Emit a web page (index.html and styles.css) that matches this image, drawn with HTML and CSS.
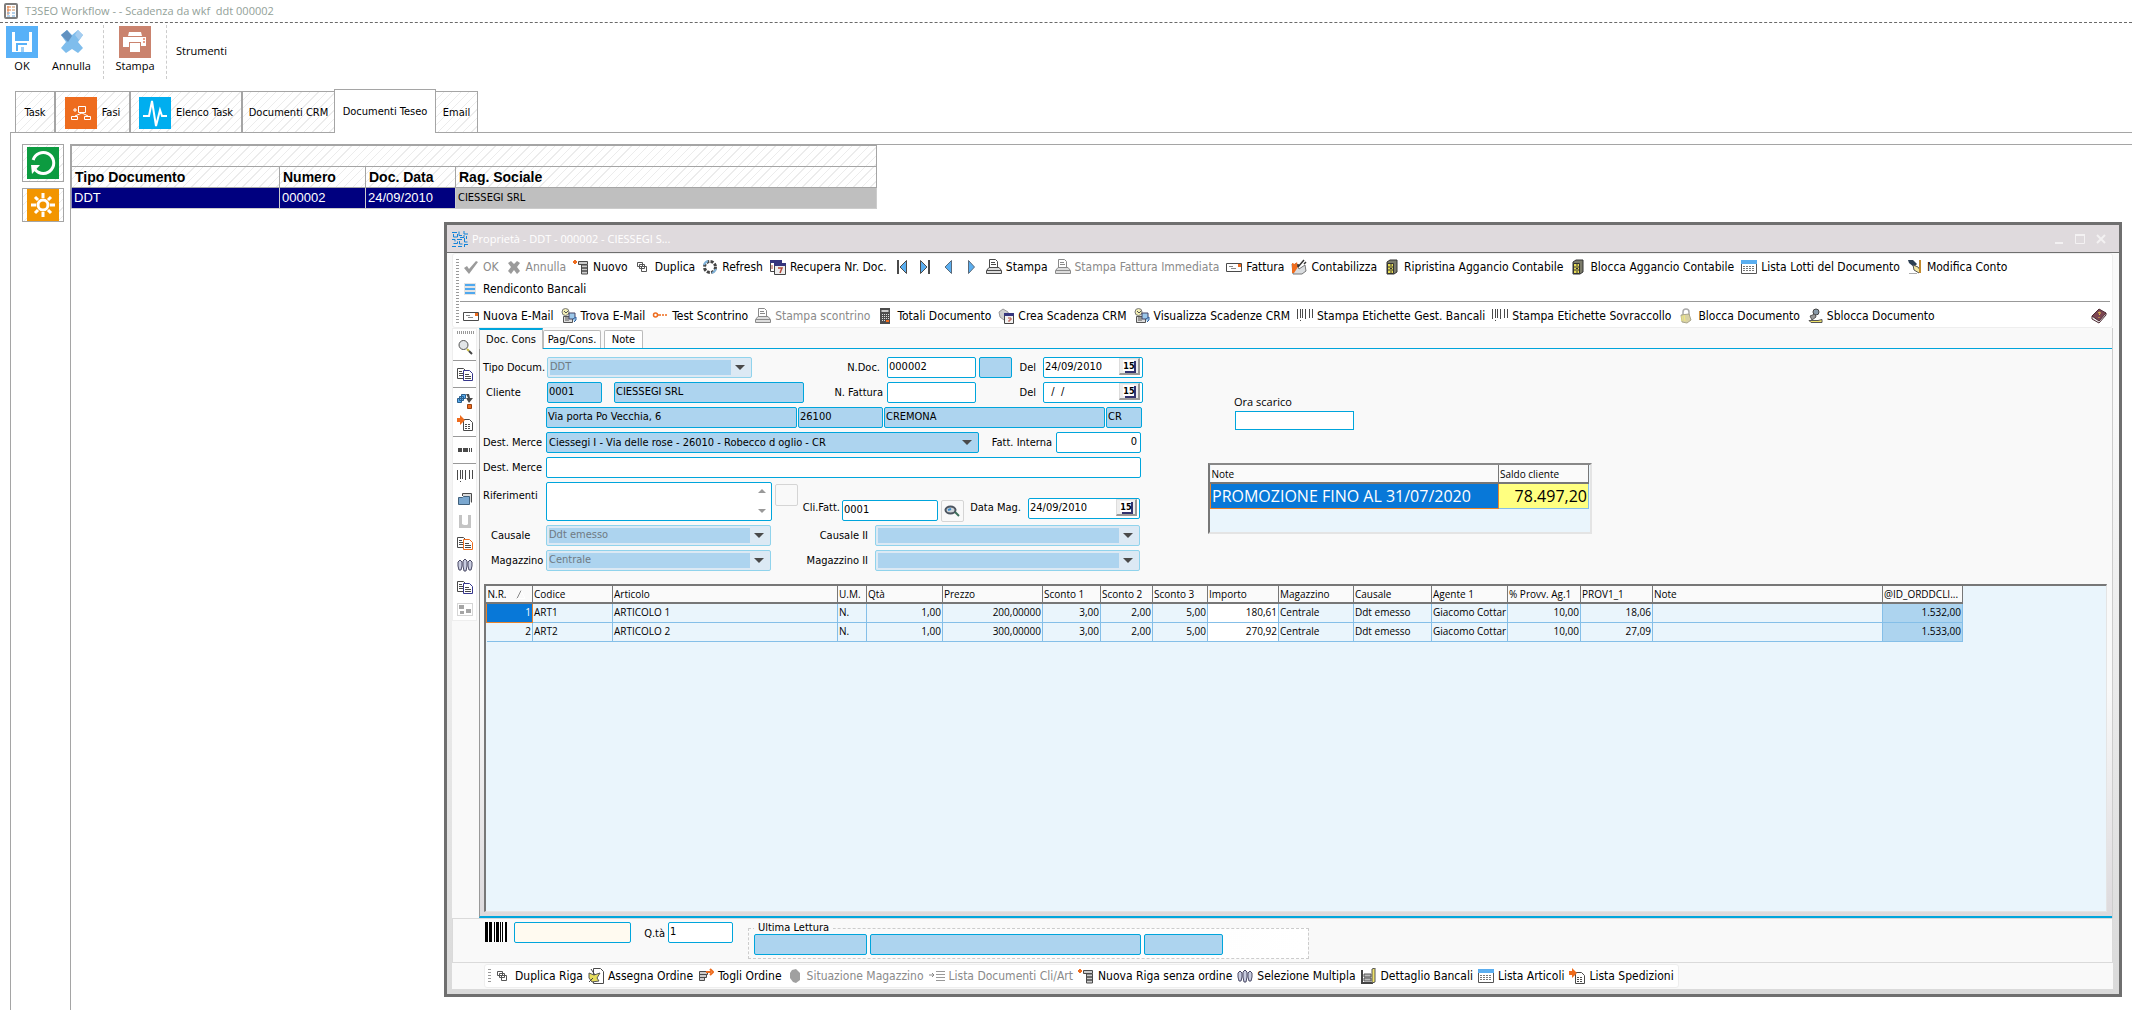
FILE: index.html
```html
<!DOCTYPE html>
<html lang="it">
<head>
<meta charset="utf-8">
<title>T3SEO Workflow</title>
<link rel="stylesheet" href="styles.css">
</head>
<body>
<svg class="sprite" aria-hidden="true">
  <symbol id="i-check" viewBox="0 0 16 16"><path d="M1 9l3-2 2 3 7-8 2 1-9 12z" fill="#9b9b9b"/></symbol>
  <symbol id="i-cross" viewBox="0 0 16 16"><path d="M2 4l3-2 3 3 3-3 3 2-3 4 3 4-3 3-3-4-3 4-3-3 3-4z" fill="#9b9b9b"/></symbol>
  <symbol id="i-new" viewBox="0 0 16 16"><path d="M0 3h4M2 1v4" stroke="#ee6c1e" stroke-width="2"/><path d="M5.500 2.500h9v3h-9zM8.500 6h6v3h-6zM8.500 9h6v3h-6zM8.500 12h6v3h-6z" fill="#ccc" stroke="#4a4a4a"/></symbol>
  <symbol id="i-dup" viewBox="0 0 16 16"><path d="M2.500 3.500h5v4h-5zM4.500 5.500h5v4h-5zM6.500 7.500h5v5h-5z" fill="#fff" stroke="#555"/></symbol>
  <symbol id="i-refresh" viewBox="0 0 16 16"><circle cx="8" cy="8" r="5.500" fill="none" stroke="#444" stroke-width="3" stroke-dasharray="3 1.300"/><path d="M2 6a6 6 0 0 1 4-4M14 10a6 6 0 0 1-4 4" stroke="#7fb2d9" stroke-width="2" fill="none"/></symbol>
  <symbol id="i-cal" viewBox="0 0 16 16"><path d="M.5 1.500h11v11H.5z" fill="#fff" stroke="#444"/><path d="M0 1h12v3H0z" fill="#36367e"/><path d="M4.500 4.500h11v11h-11z" fill="#eee" stroke="#444"/><path d="M4 4h12v3H4z" fill="#36367e"/><path d="M8 9h4l-2 5" stroke="#b44a3a" stroke-width="1.500" fill="none"/><path d="M2 6v4" stroke="#b44a3a"/></symbol>
  <symbol id="i-first" viewBox="0 0 16 16"><path d="M4 1v14" stroke="#4a4a4a" stroke-width="2"/><path d="M12.500 1.500v13L6 8z" fill="#5aaef0" stroke="#4a4a4a"/></symbol>
  <symbol id="i-last" viewBox="0 0 16 16"><path d="M12 1v14" stroke="#4a4a4a" stroke-width="2"/><path d="M3.500 1.500v13L10 8z" fill="#5aaef0" stroke="#4a4a4a"/></symbol>
  <symbol id="i-prev" viewBox="0 0 16 16"><path d="M11.500 1.500v13L5 8z" fill="#5aaef0" stroke="#5a6a7a"/></symbol>
  <symbol id="i-next" viewBox="0 0 16 16"><path d="M5.500 1.500v13L11.500 8z" fill="#5aaef0" stroke="#5a6a7a"/></symbol>
  <symbol id="i-print" viewBox="0 0 16 16"><path d="M3.500 9V.5h6l2 2V9" fill="#fff" stroke="currentColor"/><path d="M5 3.500h4M5 5.500h5" stroke="currentColor"/><path d="M.5 11.500L3 8.500h10l2.500 3v3H.5z" fill="#ddd" stroke="currentColor"/><path d="M1 11.500h14" stroke="currentColor"/></symbol>
  <symbol id="i-mail" viewBox="0 0 16 16"><path d="M.5 4.500h15v8H.5z" fill="#fff" stroke="#4a4a4a"/><path d="M12 5h3v3h-3z" fill="#ee6c1e"/><path d="M3 7.500h4M5 9.500h5" stroke="#888"/></symbol>
  <symbol id="i-post" viewBox="0 0 16 16"><path d="M1 5l3 1 1-2 3 6 6-4 1 6-4 3H2z" fill="#d9dcdf" stroke="#777"/><path d="M1 4l3 1 2-2 1 5-4 6H1z" fill="#ee6c1e"/><path d="M7 8l6-7M7 8V5M13 5l2-2" stroke="#333" stroke-width="1.500"/></symbol>
  <symbol id="i-cab" viewBox="0 0 16 16"><path d="M3 3l3-2h7v12l-3 2H3z" fill="#7b7b6a" stroke="#333"/><path d="M3.500 4.500h6v10h-6z" fill="#e8dd55" stroke="#333"/><path d="M4 8h5M4 11h5M6 6h2M6 9.500h2M6 13h2" stroke="#333"/></symbol>
  <symbol id="i-table" viewBox="0 0 16 16"><path d="M.5 1.500h15v13H.5z" fill="#fff" stroke="#555"/><path d="M0 1h16v4H0z" fill="#5aaef0"/><path d="M2 7.500h12M2 9.500h12M2 11.500h12" stroke="#777" stroke-dasharray="2 1"/></symbol>
  <symbol id="i-hand" viewBox="0 0 16 16"><path d="M1 1h5l4 4-3 3-5-4z" fill="#2d3f52"/><path d="M6 6l5 2 2 3-1 3-5-3z" fill="#f3e7a0" stroke="#555"/><path d="M13 1v13" stroke="#c48a2c" stroke-width="2"/><path d="M2 14.500h8" stroke="#aaa"/></symbol>
  <symbol id="i-lines" viewBox="0 0 16 16"><path d="M1 2h12v12H1z" fill="#e4e4e4"/><path d="M2 4h10M2 8h10M2 12h10" stroke="#4fa8ee" stroke-width="2"/></symbol>
  <symbol id="i-find" viewBox="0 0 16 16"><circle cx="4.500" cy="4" r="3.500" fill="#f2eeb4" stroke="#777"/><path d="M3 3l2 2 2-2" stroke="#555" fill="none"/><path d="M2.500 8.500h9v6h-9z" fill="#ddd" stroke="#555"/><path d="M8 5h6v6H8z" fill="#9cc8ea" stroke="#446"/><path d="M12 11l3-2v3l-2 2" stroke="#2f5f9f" fill="#9cc8ea"/><path d="M4 10h4M4 12h4" stroke="#555"/></symbol>
  <symbol id="i-test" viewBox="0 0 16 16"><circle cx="3.500" cy="7" r="2" fill="#fff" stroke="#ee6c1e" stroke-width="1.500"/><path d="M6 7h3M10 7h2M13 7h2" stroke="#ee6c1e" stroke-width="1.500"/></symbol>
  <symbol id="i-calc" viewBox="0 0 16 16"><path d="M3 0h10v16H3z" fill="#4d4d4d"/><path d="M4.500 2h7v2h-7z" fill="#ccc"/><path d="M5 6.500h7M5 8.500h7M5 10.500h7M5 12.500h4" stroke="#ddd" stroke-dasharray="1 1"/><path d="M9 13h3" stroke="#ee6c1e" stroke-width="2"/></symbol>
  <symbol id="i-crm" viewBox="0 0 16 16"><path d="M1 4l4-3 5 3 1 5-5 3-4-3z" fill="#cfcfcf" stroke="#999"/><path d="M6.500 5.500h9v10h-9z" fill="#f2f2f2" stroke="#444"/><path d="M6 5h10v3H6z" fill="#36367e"/><path d="M10 10h3v2h-2v2" stroke="#b44a3a" fill="none"/></symbol>
  <symbol id="i-bars" viewBox="0 0 16 16"><path d="M.5 1v10M3.500 1v9M5.500 1v9M8.500 1v10M12.500 1v9M15.500 1v9" stroke="#4a4a4a"/><path d="M3 12.500h1" stroke="#4a4a4a"/></symbol>
  <symbol id="i-lock" viewBox="0 0 16 16"><path d="M5 8V4a3 3 0 0 1 6 0v4" fill="none" stroke="#aaa" stroke-width="1.500"/><path d="M3 7l8-1 2 6-4 3-5-1z" fill="#d9d2a4" stroke="#a9a58c"/><path d="M4 8v5M6 7l1 6" stroke="#f2ec7c"/></symbol>
  <symbol id="i-keys" viewBox="0 0 16 16"><circle cx="9" cy="4" r="3" fill="#8899a8" stroke="#444"/><path d="M3 8l5-2 1 3-4 3z" fill="#999" stroke="#555"/><path d="M2 12.500h9l4-1v3H4z" fill="#efe36a" stroke="#555"/></symbol>
  <symbol id="i-book" viewBox="0 0 16 16"><path d="M1 8v3l7 4 7-8V5z" fill="#eee" stroke="#4d2a33"/><path d="M1 8l7-7 7 4-7 8z" fill="#7c4652" stroke="#4d2a33"/><path d="M7 5l2-1v2l-1 1M8 9v1" stroke="#e8c34c" fill="none"/></symbol>
  <symbol id="i-search" viewBox="0 0 16 16"><circle cx="6.500" cy="6" r="4.500" fill="#e3e6e8" stroke="#555"/><path d="M10 10l2 2" stroke="#c9bb3c" stroke-width="2"/><path d="M12 12l3 3" stroke="#444" stroke-width="2"/></symbol>
  <symbol id="i-copy" viewBox="0 0 16 16"><path d="M.5 2.500h6l3 3v7h-9z" fill="#fff" stroke="#4a4a4a"/><path d="M2 5.500h3M2 7.500h4M2 9.500h4" stroke="#4a4a4a"/><path d="M6.500 4.500h6l3 3v7h-9z" fill="#fff" stroke="currentColor"/><path d="M8 8.500h4M8 10.500h6M8 12.500h6" stroke="#4a4a4a"/></symbol>
  <symbol id="i-cubes" viewBox="0 0 16 16"><path d="M4.500 1.500h4v4h-4zM2.500 3.500h4v4h-4zM.5 5.500h4v4h-4z" fill="#5aaef0" stroke="#2b5f8d"/><path d="M9 1h3l1 4h3l-4 5-3-5h2z" fill="#4a4a4a"/><path d="M10.500 11.500h4v4h-4z" fill="#ee6c1e" stroke="#9a4310"/></symbol>
  <symbol id="i-import" viewBox="0 0 16 16"><path d="M6.500 4.500h6l3 3v8h-9z" fill="#fff" stroke="#4a4a4a"/><path d="M8 9.500h6M8 11.500h6M8 13.500h6" stroke="#4a4a4a" stroke-dasharray="2 1"/><path d="M0 3h3V0l5 5-5 5V7H0z" fill="#ee6c1e"/></symbol>
  <symbol id="i-dots" viewBox="0 0 16 16"><path d="M1 6h4v4H1zM6 6h5v4H6zM12 6h1v4h-1zM14 6h1v4h-1z" fill="#4a4a4a"/></symbol>
  <symbol id="i-folder" viewBox="0 0 16 16"><path d="M5.500 5V2.500h9v9" fill="#ddd" stroke="#4a4a4a"/><path d="M1.500 6.500h4l1-1h6v8h-11z" fill="#7aa7cf" stroke="#41617d"/></symbol>
  <symbol id="i-page" viewBox="0 0 16 16"><path d="M2 2h3v9l2 1h3l1-1V2h3v13H2z" fill="#c4c4c4"/></symbol>
  <symbol id="i-people" viewBox="0 0 16 16"><path d="M1 5l2-2 2 2v4l-1 4H2L1 9zM6 4l2-2 2 2v5l-1 5H7L6 9zM11 5l2-2 2 2v4l-1 4h-2l-1-4z" fill="#c9cde0" stroke="#4a4a66"/></symbol>
  <symbol id="i-tree" viewBox="0 0 16 16"><path d="M.5 2.500h15v12H.5z" fill="#fff" stroke="#aaa" stroke-dasharray="1 1"/><path d="M2 4h5v4H2zM9 8h5v4H9zM3 10h4v3H3z" fill="#a5a5a5"/></symbol>
  <symbol id="i-assign" viewBox="0 0 16 16"><path d="M5.500.5h7l3 3v12h-10z" fill="#fff" stroke="#4a4a4a"/><path d="M1 5l5 2 6-2-3 5 2 3-7 1-3-4z" fill="#e6dd5c" stroke="#555"/><path d="M3 1l4 6M1 14l4-4" stroke="#444"/></symbol>
  <symbol id="i-remove" viewBox="0 0 16 16"><path d="M1.500 3.500h8v3h-8zM1.500 6.500h7v3h-7zM1.500 9.500h5v3h-5z" fill="#ccc" stroke="#4a4a4a"/><path d="M8 4h5M12 1l3 3-3 3" stroke="#ee6c1e" stroke-width="2" fill="none"/></symbol>
  <symbol id="i-blob" viewBox="0 0 16 16"><path d="M5 2l4-1 4 4v7l-4 3-3-1-3-4V5z" fill="#a0a0a0"/></symbol>
  <symbol id="i-list" viewBox="0 0 16 16"><path d="M0 7h4M3 5l2 2-2 2" stroke="#888" fill="none"/><path d="M7 3.500h9M7 6.500h9M7 9.500h9M7 12.500h9" stroke="#999"/></symbol>
  <symbol id="i-pallet" viewBox="0 0 16 16"><path d="M1 2v13h11" stroke="#444" stroke-width="2" fill="none"/><path d="M3 6h7v3H3zM3 10h7v3H3z" fill="#bbb" stroke="#555"/><path d="M11 1l3-1v14l-3 1z" fill="#efe36a" stroke="#555"/></symbol>
  <symbol id="i-glass" viewBox="0 0 16 16"><ellipse cx="6.500" cy="7" rx="5" ry="3.500" fill="#cfd4d8" stroke="#4d5560" stroke-width="2"/><path d="M11 9l4 4" stroke="#3d6f5a" stroke-width="2"/><path d="M4 7l3-1" stroke="#3a8fd0" stroke-width="2"/></symbol>
</svg>

<header class="titlebar">
  <svg width="14" height="16" viewBox="0 0 14 16"><rect x="1" y="1" width="12" height="14" rx="1" fill="#fff" stroke="#7d7d7d" stroke-width="2"/><path d="M4 3v9M3 4h4M3 7h4" stroke="#e07b3c"/><path d="M8 4h3M8 7h3" stroke="#c98a58"/><path d="M3 10h3M8 10h3M3 13h3M8 13h3" stroke="#6aa5d8"/></svg>
  <h1>T3SEO Workflow - - Scadenza da wkf&nbsp; ddt 000002</h1>
</header>

<nav class="mainbar">
  <button class="big"><svg width="32" height="32" viewBox="0 0 32 32"><path fill="#58b1f8" d="M0 0h32v32H0z"/><path d="M6 6h3v9h14V6h3v20H6z" fill="#fff"/><path d="M10 17h11v8H10z" fill="#58b1f8"/><path d="M12 19h9v7h-9z" fill="#fff"/><path d="M15 21h3v5h-3z" fill="#9ccff8"/></svg>OK</button>
  <button class="big"><svg width="32" height="32" viewBox="0 0 32 32"><path d="M5 9l6-5 5 5 6-5 5 5-5 7 5 6-5 5-6-4-6 4-5-5 5-6z" fill="#7fbdec"/><path d="M5 9l6-5 5 6-4 6z" fill="#6191c0"/><path d="M22 4l5 5-4 5-4-5z" fill="#a5cdf0"/></svg>Annulla</button>
  <button class="big bordered"><svg width="32" height="32" viewBox="0 0 32 32"><path fill="#ca836e" d="M0 0h32v32H0z"/><path d="M10 6h12l1 4H9zM4 11h23v9h-5v-4H10v5H4zM11 17h10v9H11z" fill="#fff"/><path d="M24 13h2M24 16h2" stroke="#e9a08a" stroke-width="2"/></svg>Stampa</button>
  <button class="menu">Strumenti</button>
</nav>

<div class="maintabs" role="tablist">
  <button role="tab" class="tab t-task">Task</button>
  <button role="tab" class="tab t-fasi"><svg width="32" height="32" viewBox="0 0 32 32"><path fill="#ee6c1e" d="M0 0h32v32H0z"/><path d="M13.500 9.500h7v6h-7zM6.500 19.500h6v3h-6zM19.500 19.500h6v3h-6zM17 16l-7 3M17 16l6 3M8 13h4M10 11v4" fill="none" stroke="#fff"/></svg>Fasi</button>
  <button role="tab" class="tab t-elenco"><svg width="32" height="32" viewBox="0 0 32 32"><path fill="#00aeef" d="M0 0h32v32H0z"/><path d="M4 19h6l3-15 4 25 4-16 2 6h5" fill="none" stroke="#fff" stroke-width="2"/></svg>Elenco Task</button>
  <button role="tab" class="tab t-crm">Documenti CRM</button>
  <button role="tab" class="tab t-teseo active" aria-selected="true">Documenti Teseo</button>
  <button role="tab" class="tab t-email">Email</button>
</div>

<main class="panel">
  <div class="side">
    <button class="sq" aria-label="Aggiorna"><svg width="32" height="32" viewBox="0 0 32 32"><path fill="#0c9b40" d="M0 0h32v32H0z"/><path d="M7 21a10.500 10.500 0 1 0 0-10" transform="rotate(-12 16 16)" fill="none" stroke="#fff" stroke-width="3"/><path d="M4 18h9l-8 9z" fill="#fff"/></svg></button>
    <button class="sq" aria-label="Impostazioni"><svg width="32" height="32" viewBox="0 0 32 32"><path fill="#f29500" d="M0 0h32v32H0z"/><circle cx="16" cy="16" r="5" fill="none" stroke="#fff" stroke-width="3"/><path d="M16 4v5M16 23v5M4 16h5M23 16h5M8 8l3 3M21 21l3 3M24 8l-3 3M8 24l3-3" stroke="#fff" stroke-width="3"/></svg></button>
  </div>
  <div class="doclist">
    <table class="docs">
      <colgroup><col class="d1"><col class="d2"><col class="d3"><col class="d4"></colgroup>
      <thead>
        <tr class="group"><td colspan="4"></td></tr>
        <tr><th>Tipo Documento</th><th>Numero</th><th>Doc. Data</th><th>Rag. Sociale</th></tr>
      </thead>
      <tbody><tr><td>DDT</td><td>000002</td><td>24/09/2010</td><td class="rag">CIESSEGI SRL</td></tr></tbody>
    </table>
  </div>
</main>

<section class="window">
  <header class="wtitle">
    <svg width="16" height="16" viewBox="0 0 16 16"><path d="M0 1.500h5M7 .5v4h3M12 0v3h4M1.500 3v3h4V3M8 6.500h4V4M14.500 5v3M0 8.500h3v2M5 8.500h5M12.500 7v4h3M1.500 12.500h4v-2M7.500 10v3h3M0 15.500h4M6 15.500h4M12 13.500h4M12.500 13v3" fill="none" stroke="#1283d8"/></svg>
    <h2>Proprietà - DDT - 000002 - CIESSEGI S...</h2>
    <button aria-label="Riduci"><svg width="10" height="12" viewBox="0 0 10 12"><path d="M1 10h8" stroke="#f3f1f2" stroke-width="2"/></svg></button>
    <button aria-label="Ingrandisci"><svg width="10" height="12" viewBox="0 0 10 12"><path d="M.5 2h9v8.500h-9z" fill="none" stroke="#f3f1f2"/><path d="M0 2h10" stroke="#f3f1f2" stroke-width="2"/></svg></button>
    <button aria-label="Chiudi"><svg width="10" height="12" viewBox="0 0 10 12"><path d="M1 2l8 8M9 2l-8 8" stroke="#f3f1f2" stroke-width="2"/></svg></button>
  </header>

  <div class="wbody">
    <div class="toolbars">
      <div class="bar">
        <button disabled><svg><use href="#i-check"/></svg>OK</button>
        <button disabled><svg><use href="#i-cross"/></svg>Annulla</button>
        <button><svg><use href="#i-new"/></svg>Nuovo</button>
        <button><svg><use href="#i-dup"/></svg>Duplica</button>
        <button><svg><use href="#i-refresh"/></svg>Refresh</button>
        <button><svg><use href="#i-cal"/></svg>Recupera Nr. Doc.</button>
        <button aria-label="Primo"><svg><use href="#i-first"/></svg></button>
        <button aria-label="Ultimo"><svg><use href="#i-last"/></svg></button>
        <button aria-label="Precedente"><svg><use href="#i-prev"/></svg></button>
        <button aria-label="Successivo"><svg><use href="#i-next"/></svg></button>
        <button><svg><use href="#i-print"/></svg>Stampa</button>
        <button disabled><svg><use href="#i-print"/></svg>Stampa Fattura Immediata</button>
        <button><svg><use href="#i-mail"/></svg>Fattura</button>
        <button><svg><use href="#i-post"/></svg>Contabilizza</button>
        <button><svg><use href="#i-cab"/></svg>Ripristina Aggancio Contabile</button>
        <button><svg><use href="#i-cab"/></svg>Blocca Aggancio Contabile</button>
        <button><svg><use href="#i-table"/></svg>Lista Lotti del Documento</button>
        <button><svg><use href="#i-hand"/></svg>Modifica Conto</button>
      </div>
      <div class="bar">
        <button><svg><use href="#i-lines"/></svg>Rendiconto Bancali</button>
      </div>
      <div class="bar ruled">
        <button><svg><use href="#i-mail"/></svg>Nuova E-Mail</button>
        <button><svg><use href="#i-find"/></svg>Trova E-Mail</button>
        <button><svg><use href="#i-test"/></svg>Test Scontrino</button>
        <button disabled><svg><use href="#i-print"/></svg>Stampa scontrino</button>
        <button><svg><use href="#i-calc"/></svg>Totali Documento</button>
        <button><svg><use href="#i-crm"/></svg>Crea Scadenza CRM</button>
        <button><svg><use href="#i-find"/></svg>Visualizza Scadenze CRM</button>
        <button><svg><use href="#i-bars"/></svg>Stampa Etichette Gest. Bancali</button>
        <button><svg><use href="#i-bars"/></svg>Stampa Etichette Sovraccollo</button>
        <button><svg><use href="#i-lock"/></svg>Blocca Documento</button>
        <button><svg><use href="#i-keys"/></svg>Sblocca Documento</button>
        <button class="help" aria-label="Aiuto"><svg><use href="#i-book"/></svg></button>
      </div>
    </div>

    <div class="work">
      <div class="vcol">
        <div class="vbar">
          <button aria-label="Cerca"><svg><use href="#i-search"/></svg></button>
          <hr>
          <button aria-label="Copia" class="navy"><svg><use href="#i-copy"/></svg></button>
          <hr>
          <button aria-label="Articoli"><svg><use href="#i-cubes"/></svg></button>
          <button aria-label="Importa"><svg><use href="#i-import"/></svg></button>
          <hr>
          <button aria-label="Lotti"><svg><use href="#i-dots"/></svg></button>
          <hr>
          <button aria-label="Etichette"><svg><use href="#i-bars"/></svg></button>
          <button aria-label="Cartella"><svg><use href="#i-folder"/></svg></button>
          <button aria-label="Registro"><svg><use href="#i-page"/></svg></button>
          <button aria-label="Duplica righe" class="orange"><svg><use href="#i-copy"/></svg></button>
          <button aria-label="Anagrafiche"><svg><use href="#i-people"/></svg></button>
          <button aria-label="Copia documento" class="navy"><svg><use href="#i-copy"/></svg></button>
          <button aria-label="Struttura"><svg><use href="#i-tree"/></svg></button>
        </div>
      </div>

      <div class="page">
        <div class="ptabs" role="tablist">
          <button role="tab" class="on" aria-selected="true">Doc. Cons</button>
          <button role="tab">Pag/Cons.</button>
          <button role="tab">Note</button>
        </div>
        <div class="pcontent">
          <div class="formarea">
            <form class="form">
              <div class="row r1">
                <label for="tipo">Tipo Docum.</label>
                <span class="combo off"><select id="tipo" disabled><option>DDT</option></select></span>
                <label class="r" for="ndoc">N.Doc.</label>
                <input id="ndoc" value="000002">
                <input class="ro gap" aria-label="Serie" readonly>
                <label class="r" for="del1">Del</label>
                <span class="date"><input id="del1" value="24/09/2010"><button type="button">15</button></span>
              </div>
              <div class="row r2">
                <label class="in1" for="cli">Cliente</label>
                <input id="cli" class="ro" value="0001" readonly>
                <input class="ro" aria-label="Ragione sociale" value="CIESSEGI SRL" readonly>
                <label class="r near" for="nfat">N. Fattura</label>
                <input id="nfat">
                <label class="r" for="del2">Del</label>
                <span class="date"><input id="del2" value="  /  /"><button type="button">15</button></span>
              </div>
              <div class="row r3">
                <input class="ro" aria-label="Indirizzo" value="Via porta Po Vecchia, 6" readonly>
                <input class="ro" aria-label="CAP" value="26100" readonly>
                <input class="ro" aria-label="Città" value="CREMONA" readonly>
                <input class="ro" aria-label="Provincia" value="CR" readonly>
              </div>
              <div class="row r4">
                <label for="dest">Dest. Merce</label>
                <span class="combo"><select id="dest"><option>Ciessegi I - Via delle rose - 26010 - Robecco d oglio - CR</option></select></span>
                <label class="r near" for="fint">Fatt. Interna</label>
                <input id="fint" class="num" value="0">
              </div>
              <div class="row r5">
                <label for="dest2">Dest. Merce</label>
                <input id="dest2">
              </div>
              <div class="row r6">
                <label for="rif">Riferimenti</label>
                <span class="memo"><textarea id="rif"></textarea></span>
                <button type="button" class="small" aria-label="Dettagli"></button>
                <label class="r low" for="clif">Cli.Fatt.</label>
                <input id="clif" class="mid" value="0001">
                <button type="button" class="small mid" aria-label="Cerca cliente"><svg><use href="#i-glass"/></svg></button>
                <label class="r" for="dmag">Data Mag.</label>
                <span class="date"><input id="dmag" value="24/09/2010"><button type="button">15</button></span>
              </div>
              <div class="row r7">
                <label class="in2" for="cau">Causale</label>
                <span class="combo off"><select id="cau" disabled><option>Ddt emesso</option></select></span>
                <label class="r" for="cau2">Causale II</label>
                <span class="combo off"><select id="cau2" disabled><option></option></select></span>
              </div>
              <div class="row r7">
                <label class="in2" for="mag">Magazzino</label>
                <span class="combo off"><select id="mag" disabled><option>Centrale</option></select></span>
                <label class="r" for="mag2">Magazzino II</label>
                <span class="combo off"><select id="mag2" disabled><option></option></select></span>
              </div>
            </form>

            <div class="extra">
              <div class="ora"><label for="ora">Ora scarico</label><input id="ora"></div>
              <div class="notes">
                <table>
                  <colgroup><col class="n1"><col class="n2"></colgroup>
                  <thead><tr><th>Note</th><th>Saldo cliente</th></tr></thead>
                  <tbody><tr><td class="promo">PROMOZIONE FINO AL 31/07/2020</td><td class="saldo">78.497,20</td></tr></tbody>
                </table>
              </div>
            </div>
          </div>

          <div class="gridbox">
            <table class="lines">
              <colgroup><col class="c46"><col class="c80"><col class="c225"><col class="c29"><col class="c76"><col class="c100"><col class="c58"><col class="c52"><col class="c55"><col class="c71"><col class="c75"><col class="c78"><col class="c76"><col class="c73"><col class="c72"><col class="c230"><col class="c80"></colgroup>
              <thead><tr><th><span class="sort">N.R.<svg width="10" height="9" viewBox="0 0 10 9"><path d="M1 8.500L5 .5" stroke="#888"/><path d="M5 .5l4 8H1" fill="none" stroke="#fff"/></svg></span></th><th>Codice</th><th>Articolo</th><th>U.M.</th><th>Qtà</th><th>Prezzo</th><th>Sconto 1</th><th>Sconto 2</th><th>Sconto 3</th><th>Importo</th><th>Magazzino</th><th>Causale</th><th>Agente 1</th><th>% Provv. Ag.1</th><th>PROV1_1</th><th>Note</th><th>@ID_ORDDCLI...</th></tr></thead>
              <tbody>
                <tr><td class="n cur">1</td><td>ART1</td><td>ARTICOLO 1</td><td>N.</td><td class="n">1,00</td><td class="n">200,00000</td><td class="n">3,00</td><td class="n">2,00</td><td class="n">5,00</td><td class="n w">180,61</td><td>Centrale</td><td>Ddt emesso</td><td>Giacomo Cottar</td><td class="n">10,00</td><td class="n">18,06</td><td></td><td class="n b">1.532,00</td></tr>
                <tr><td class="n">2</td><td>ART2</td><td>ARTICOLO 2</td><td>N.</td><td class="n">1,00</td><td class="n">300,00000</td><td class="n">3,00</td><td class="n">2,00</td><td class="n">5,00</td><td class="n w">270,92</td><td>Centrale</td><td>Ddt emesso</td><td>Giacomo Cottar</td><td class="n">10,00</td><td class="n">27,09</td><td></td><td class="n b">1.533,00</td></tr>
              </tbody>
            </table>
          </div>
        </div>
      </div>
    </div>

    <div class="reader">
      <svg class="code" width="22" height="20" viewBox="0 0 22 20"><path fill="#fff" d="M0 0h22v20H0z"/><path d="M0 0h3v20H0zM4 0h3v20H4zM9 0h1v20H9zM11 0h3v20h-3zM15 0h1v20h-1zM17 0h1v20h-1zM20 0h2v20h-2z"/></svg>
      <input class="scan" aria-label="Codice a barre">
      <label for="qta">Q.tà</label><input id="qta" value="1">
      <fieldset>
        <legend>Ultima Lettura</legend>
        <input class="ro u1" aria-label="Codice" readonly><input class="ro u2" aria-label="Descrizione" readonly><input class="ro u3" aria-label="Quantità letta" readonly>
      </fieldset>
    </div>

    <div class="bottom">
      <div class="bar">
        <button><svg><use href="#i-dup"/></svg>Duplica Riga</button>
        <button><svg><use href="#i-assign"/></svg>Assegna Ordine</button>
        <button><svg><use href="#i-remove"/></svg>Togli Ordine</button>
        <button disabled><svg><use href="#i-blob"/></svg>Situazione Magazzino</button>
        <button disabled><svg><use href="#i-list"/></svg>Lista Documenti Cli/Art</button>
        <button><svg><use href="#i-new"/></svg>Nuova Riga senza ordine</button>
        <button><svg><use href="#i-people"/></svg>Selezione Multipla</button>
        <button><svg><use href="#i-pallet"/></svg>Dettaglio Bancali</button>
        <button><svg><use href="#i-table"/></svg>Lista Articoli</button>
        <button><svg><use href="#i-import"/></svg>Lista Spedizioni</button>
      </div>
    </div>
  </div>
</section>
</body>
</html>
```
FILE: styles.css
```css
* { box-sizing: border-box; }
body {
  margin: 0;
  min-height: 100vh;
  display: flex;
  flex-direction: column;
  position: relative;
  background: #fff;
  color: #000;
  font: 11px/14px "DejaVu Sans Condensed", "DejaVu Sans", sans-serif;
}
button, input, select, textarea {
  margin: 0;
  padding: 0;
  border: 0;
  border-radius: 0;
  background: none;
  font: inherit;
  color: inherit;
}
h1, h2 { margin: 0; font: 11px/16px "Open Sans", sans-serif; }
.sprite { position: absolute; width: 0; height: 0; }
svg { flex: none; display: block; }

/* main window */
.titlebar {
  display: flex;
  align-items: center;
  gap: 7px;
  height: 23px;
  padding-left: 4px;
  border-bottom: 1px dashed #6a6a6a;
}
.titlebar h1 { color: #93a199; }
.mainbar {
  display: flex;
  height: 66px;
  padding: 2px 0 0 0;
  font: 11px/16px "Open Sans", sans-serif;
}
.big {
  display: flex;
  flex-direction: column;
  align-items: center;
  height: 54px;
  width: 44px;
  padding-top: 1px;
}
.big + .big { width: 55px; margin-right: 4px; }
.big + .bordered {
  width: 64px;
  margin-right: 0;
  border-left: 1px dashed #ccc;
  border-right: 1px dashed #ccc;
}
.menu { height: 52px; padding: 0 9px; }

.maintabs {
  display: flex;
  align-items: flex-end;
  height: 44px;
  padding-left: 15px;
  background: linear-gradient(#a5a5a5, #a5a5a5) 10px 100% / 100% 1px no-repeat;
}
.tab {
  display: flex;
  align-items: center;
  justify-content: center;
  gap: 5px;
  height: 42px;
  padding-top: 1px;
  border: 1px solid #a5a5a5;
  background: repeating-linear-gradient(135deg, #fff 0 5px, #ececec 5px 6px);
}
.t-task { width: 40px; }
.t-fasi { width: 75px; }
.t-elenco { width: 112px; }
.t-crm { width: 92px; border-right: 0; }
.t-email { width: 42px; border-left: 0; }
.tab.active { width: 102px; height: 44px; background: #fff; border-bottom: 0; }

.panel {
  flex: 1;
  display: flex;
  margin-left: 10px;
  border-left: 1px solid #a5a5a5;
  padding-top: 11px;
}
.side {
  display: flex;
  flex-direction: column;
  gap: 6px;
  width: 59px;
  padding-left: 11px;
}
.sq {
  display: flex;
  align-items: center;
  justify-content: center;
  width: 42px;
  height: 38px;
  border: 1px solid #a5a5a5;
  background: repeating-linear-gradient(135deg, #fff 0 5px, #ececec 5px 6px);
}
.sq + .sq { height: 34px; }
.doclist { flex: 1; border: solid #a5a5a5; border-width: 1px 0 0 1px; }
table { border-collapse: collapse; table-layout: fixed; }
.docs { width: 805px; font: 13px/20px "Liberation Sans", sans-serif; }
.d1 { width: 208px; } .d2 { width: 86px; } .d3 { width: 90px; } .d4 { width: 421px; }
.docs td, .docs th {
  height: 21px;
  padding: 0 0 0 2px;
  border: 1px solid #ccc;
  text-align: left;
  white-space: nowrap;
}
.docs thead { background: repeating-linear-gradient(135deg, #fff 0 5px, #ececec 5px 6px); }
.docs thead td, .docs th { border-color: #a5a5a5; }
.docs .group td { height: 21px; }
.docs th { font-size: 14px; font-weight: bold; padding-left: 3px; }
.docs tbody td { background: #00007f; color: #fff; border-left-color: #8c8cb8; }
.docs tbody .rag { background: #bfbfbf; color: #000; font: 11px/14px "DejaVu Sans Condensed", sans-serif; }

/* document window, floating over the workspace */
.window {
  position: absolute;
  left: 444px;
  top: 222px;
  right: 10px;
  bottom: 13px;
  display: flex;
  flex-direction: column;
  border: 3px solid #6f6f6f;
  background: #f9f9f9;
}
.wtitle {
  display: flex;
  align-items: center;
  gap: 11px;
  height: 28px;
  padding: 0 13px 0 5px;
  background: #dfdadd;
  border-bottom: 1px solid #6f6f6f;
}
.wtitle h2 { flex: 1; margin-left: -7px; color: #fff; }
.wbody {
  flex: 1;
  display: flex;
  flex-direction: column;
  padding: 0 6px 5px 5px;
  background: linear-gradient(#f9f9f9, #f9f9f9 20%, #dadada);
}
.toolbars {
  padding: 2px 2px 0 10px;
  height: 75px;
  border: 1px solid #eee;
  border-radius: 3px;
  background: repeating-linear-gradient(#999 0 1px, #fff 1px 3px) 3px 5px / 3px 65px no-repeat, #fff;
}
.bar {
  display: flex;
  gap: 7px;
  height: 22px;
  font-size: 12px;
}
.bar button {
  display: flex;
  align-items: center;
  gap: 4px;
  white-space: nowrap;
  color: #000;
}
.bar button:disabled { color: #8a8a8a; }
.bar svg, .vbar svg, .small svg { width: 16px; height: 16px; }
.bar button:not(:disabled) svg { color: #4a4a4a; }
.bar.ruled { border-top: 1px solid #999; height: 28px; margin: 1px 0 0 -3px; padding-left: 3px; }
.bar .help { margin-left: auto; padding-right: 3px; }

.work { flex: 1; display: flex; background: #f9f9f9; }
.vcol { width: 27px; }
.vbar {
  display: flex;
  flex-direction: column;
  align-items: center;
  width: 25px;
  height: 293px;
  padding-top: 7px;
  border: 1px solid #eee;
  background: repeating-linear-gradient(90deg, #999 0 1px, #fff 1px 2px) 4px 2px / 17px 3px no-repeat, #fff;
}
.vbar button { height: 22px; display: flex; align-items: center; }
.vbar hr { width: 23px; height: 1px; margin: 2px 0; border: 0; background: #999; }
.navy { color: #36368c; }
.orange { color: #ee6c1e; }

.page { flex: 1; display: flex; flex-direction: column; border-right: 1px solid #ccc; }
.ptabs {
  display: flex;
  align-items: flex-end;
  gap: 3px;
  height: 21px;
  background: linear-gradient(#00a5dc, #00a5dc) 64px 100% / 100% 1px no-repeat;
}
.ptabs button {
  height: 18px;
  width: 39px;
  margin-bottom: 1px;
  border: 1px solid #bbb;
  border-bottom: 0;
  border-radius: 2px 2px 0 0;
  background: #fff;
}
.ptabs button:nth-child(2) { width: 58px; }
.ptabs .on {
  width: 64px;
  height: 21px;
  margin: 0 -3px 0 0;
  border-top: 2px solid #00a5dc;
  border-radius: 0;
  background: #f9f9f9;
}
.pcontent {
  flex: 1;
  display: flex;
  flex-direction: column;
  padding: 8px 5px 4px 4px;
  border-left: 1px solid #999;
  border-bottom: 2px solid #00a5dc;
  background: linear-gradient(#f9f9f9, #f9f9f9 60%, #dddadd);
}
.formarea { display: flex; align-items: flex-start; margin-left: -2px; height: 227px; }
.form { display: flex; flex-direction: column; gap: 4px; width: 662px; }
.row { display: grid; align-items: center; height: 21px; }
.r1 { grid-template-columns: 65px 205px 135px 89px 36px 31px 100px; }
.r2 { grid-template-columns: 65px 55px 202px 83px 89px 67px 100px; }
.form .r2 input:nth-child(3) { justify-self: end; width: 190px; }
.r3 { grid-template-columns: 251px 85px 221px 36px; gap: 1px; padding-left: 64px; }
.r4 { grid-template-columns: 64px 433px 77px 85px; }
.r5 { grid-template-columns: 64px 595px; }
.row.r6 { grid-template-columns: 64px 226px 26px 44px 96px 28px 62px 112px; align-items: start; height: 39px; }
.r6 label { padding-top: 7px; }
.r6 label.r { padding-top: 19px; }
.r6 .mid { margin-top: 18px; }
.r6 .date { margin-top: 16px; }
.r7 { grid-template-columns: 64px 225px 104px 265px; }
label { padding-left: 1px; white-space: nowrap; }
.in1 { padding-left: 4px; }
.in2 { padding-left: 9px; }
label.r { text-align: right; padding-right: 7px; }
label.near { padding-right: 4px; }
.r6 label.low { padding-right: 2px; }
.form input, .reader input, .ora input, .memo, .date {
  width: 100%;
  height: 21px;
  border: 1px solid #00a5dc;
  border-radius: 2px;
  background: #fff;
  padding: 0 0 3px 1px;
}
.form .ro, .reader .ro { background: #add4ef; }
.form .gap { margin-left: 3px; width: 33px; }
.form .num { text-align: right; padding-right: 3px; }
.date { display: flex; padding: 0; }
.form .date input { flex: 1; min-width: 0; height: 19px; border: 0; background: none; white-space: pre; }
.date button {
  width: 21px;
  height: 17px;
  margin-right: 2px;
  border: solid;
  border-width: 1px 2px 2px 1px;
  border-color: #ddd #999 #999 #ddd;
  background: linear-gradient(#fff, #fff) 3px 1px / 11px 11px no-repeat, linear-gradient(#33336e, #33336e) 5px 2px / 11px 12px no-repeat, #eee;
  font-size: 9px;
  font-weight: bold;
  line-height: 12px;
}
.memo { position: relative; display: block; height: 39px; padding: 0; }
.memo textarea { display: block; width: 100%; height: 37px; resize: none; outline: 0; overflow: hidden; }
.memo::before, .memo::after {
  content: "";
  position: absolute;
  right: 5px;
  border: 4px solid transparent;
}
.memo::before { top: 2px; border-bottom-color: #999; }
.memo::after { bottom: 3px; border-top-color: #999; }
.small {
  width: 23px;
  height: 22px;
  margin: 2px 0 0 3px;
  padding: 2px;
  border: 1px solid #d5d5d5;
  border-radius: 2px;
}
.combo { position: relative; display: block; height: 21px; border: 1px solid #00a5dc; border-radius: 2px; background: #add4ef; }
.combo::after {
  content: "";
  position: absolute;
  right: 6px;
  top: 7px;
  border: 5px solid transparent;
  border-top-color: #4a4a4a;
  border-bottom: 0;
}
.combo select { appearance: none; display: block; width: 100%; height: 19px; padding: 0 20px 0 2px; opacity: 1; }
.combo.off { border-color: #90d3ec; background: linear-gradient(#add4ef, #add4ef) 2px 2px / calc(100% - 22px) 15px no-repeat, #dce9f4; }
.combo.off select { color: #6f7a83; padding-bottom: 2px; }

.extra { display: flex; flex-direction: column; gap: 33px; padding: 38px 0 0 64px; }
.ora { display: flex; flex-direction: column; gap: 2px; padding-left: 26px; font: 11px/14px "Open Sans", sans-serif; }
.ora label { padding: 0; }
.ora input { width: 119px; height: 19px; border-radius: 0; margin-left: 1px; }
.notes {
  width: 384px;
  height: 71px;
  border: 2px solid #888;
  border-color: #888 #e4e4e4 #e4e4e4 #777;
  background: #eaf5fc;
}
.notes table { width: 378px; }
.n1 { width: 288px; } .n2 { width: 90px; }
th { font-weight: normal; text-align: left; }
.notes th, .lines th {
  height: 18px;
  padding: 0 1px;
  border: solid #777;
  border-width: 0 1px 2px 0;
  background: #fafafa;
  font: 10px/14px "Open Sans", sans-serif;
  white-space: nowrap;
}
.notes td { height: 25px; padding: 0 1px; font: 16px/22px "Open Sans", sans-serif; white-space: nowrap; }
.notes .promo { background: #0878d8; color: #fff; border: 1px solid #e8832c; }
.notes .saldo { background: #ffff80; text-align: right; border: 1px solid #85bfe8; }

.gridbox { flex: 1; border: solid; border-width: 2px 1px 1px 2px; border-color: #777 #e4e4e4 #e4e4e4 #777; background: #eaf5fc; overflow: hidden; }
.lines { width: 1476px; }
.lines th { height: 17px; }
.c29 { width: 29px; } .c46 { width: 46px; } .c52 { width: 52px; } .c55 { width: 55px; } .c58 { width: 58px; }
.c71 { width: 71px; } .c72 { width: 72px; } .c73 { width: 73px; } .c75 { width: 75px; } .c76 { width: 76px; }
.c78 { width: 78px; } .c80 { width: 80px; } .c100 { width: 100px; } .c225 { width: 225px; } .c230 { width: 230px; }
.sort { display: flex; align-items: center; justify-content: space-between; padding-right: 5px; }
.lines td {
  height: 19px;
  padding: 0 1px 2px;
  border: solid #85bfe8;
  border-width: 0 1px 1px 0;
  font: 10px/14px "Open Sans", sans-serif;
  white-space: nowrap;
  overflow: hidden;
}
.lines .n { text-align: right; }
.lines .cur { background: #0878d8; color: #fff; border: 1px solid #e8832c; }
.lines .w { background: #fff; }
.lines .b { background: #add4ef; }

.reader {
  display: flex;
  align-items: flex-start;
  height: 45px;
  padding: 3px 0 0 32px;
  border: 1px solid #dadada;
  background: #f9f9f9;
}
.code { margin-right: 7px; }
.reader .scan { width: 117px; background: #fffaf0; }
.reader label { width: 37px; padding: 5px 3px 0 0; text-align: right; }
.reader #qta { width: 65px; }
fieldset {
  display: flex;
  width: 561px;
  height: 37px;
  margin: 0 0 0 15px;
  padding: 0 5px;
  border: 1px dashed #ccc;
  background: linear-gradient(90deg, #f9f9f9, #fff);
}
legend { padding: 0 4px; line-height: 12px; }
.reader fieldset input { flex: none; margin-right: 3px; }
.reader .u1 { width: 113px; }
.reader .u2 { width: 271px; }
.reader .u3 { width: 79px; }
.bottom { padding: 1px 0 0 32px; height: 26px; background: #f9f9f9; }
.bottom .bar {
  gap: 5px;
  width: max-content;
  height: 24px;
  padding: 0 4px 0 10px;
  border: 1px solid #eee;
  border-radius: 3px;
  background: repeating-linear-gradient(#999 0 1px, #fff 1px 3px) 3px 4px / 3px 15px no-repeat, #fff;
}
```
